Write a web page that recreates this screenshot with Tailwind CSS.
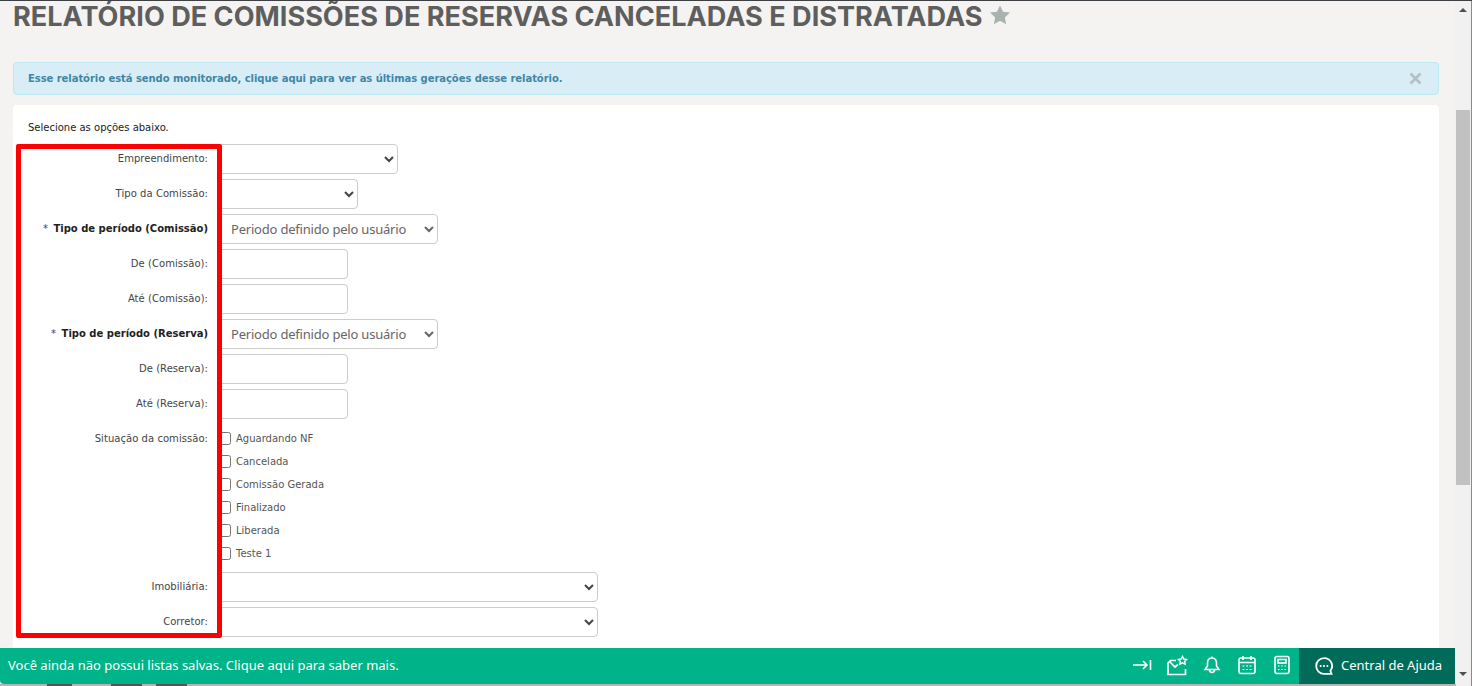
<!DOCTYPE html>
<html lang="pt-BR">
<head>
  <meta charset="UTF-8">
  <title>Relatório de comissões</title>
  <script src="https://cdn.jsdelivr.net/npm/@tailwindcss/browser@4"></script>
</head>
<body class="bg-[#f4f3f2]">
  <div class="relative w-[1472px] h-[686px] overflow-hidden flex border-t border-[#3c4043] font-['DejaVu_Sans',sans-serif] text-[10px]">

    <!-- Page content -->
    <main class="w-[1455px] shrink-0 px-[13px] pr-[16px]">
      <div class="h-[61px] flex items-start">
        <h1 class="font-['Inter',sans-serif] font-bold text-[27.1px] leading-[32px] text-[#5e5e5e] whitespace-nowrap">RELATÓRIO DE COMISSÕES DE RESERVAS CANCELADAS E DISTRATADAS</h1>
        <svg class="mt-[3px] ml-[6px] w-[22px] h-[22px] text-[#a9b2af]" viewBox="0 0 24 24" fill="currentColor"><path d="M12 1.500l3.300 6.900 7.500 1-5.500 5.200 1.400 7.500L12 18.400l-6.700 3.700 1.400-7.500L1.200 9.400l7.500-1z"/></svg>
      </div>

      <div class="h-[33px] flex items-center justify-between rounded border border-[#bce8f1] bg-[#d9edf7] pl-[14px] pr-[16px] font-bold text-[#3f86a8]">
        <span class="tracking-[-0.055px]">Esse relatório está sendo monitorado, clique aqui para ver as últimas gerações desse relatório.</span>
        <svg class="w-[13px] h-[13px] text-[#b4bfc4]" viewBox="0 0 13 13" fill="none" stroke="currentColor" stroke-width="2.500"><path d="M1.500 1.500l10 10M11.500 1.500l-10 10"/></svg>
      </div>

      <section class="mt-[10px] rounded-t bg-white pl-[15px] pt-[17px] h-[600px] text-[#444]">
        <p class="h-[22px] leading-[12px] text-[#222]">Selecione as opções abaixo.</p>

        <div class="grid grid-cols-[180px_1fr] gap-x-[10px] gap-y-[5px] items-center">
          <label class="text-right pb-[2px] tracking-[0.03px]">Empreendimento:</label>
          <select class="w-[180px] h-[30px] rounded border border-[#ccc] bg-white"></select>

          <label class="text-right pb-[2px] tracking-[0.05px]">Tipo da Comissão:</label>
          <select class="w-[140px] h-[30px] rounded border border-[#ccc] bg-white"></select>

          <label class="text-right pb-[2px] font-bold text-[#222]"><span class="mr-[2px] text-[#3a3a8c] font-normal">*</span> Tipo de período (Comissão)</label>
          <select class="w-[220px] h-[30px] rounded border border-[#ccc] bg-white pl-[8px] font-['Noto_Sans',sans-serif] text-[13px] tracking-[-0.2px] text-[#666]"><option>Periodo definido pelo usuário</option></select>

          <label class="text-right pb-[2px] tracking-[0.05px]">De (Comissão):</label>
          <input class="w-[130px] h-[30px] rounded border border-[#ccc] bg-white">

          <label class="text-right pb-[2px] tracking-[0.05px]">Até (Comissão):</label>
          <input class="w-[130px] h-[30px] rounded border border-[#ccc] bg-white">

          <label class="text-right pb-[2px] font-bold text-[#222]"><span class="mr-[2px] text-[#3a3a8c] font-normal">*</span> Tipo de período (Reserva)</label>
          <select class="w-[220px] h-[30px] rounded border border-[#ccc] bg-white pl-[8px] font-['Noto_Sans',sans-serif] text-[13px] tracking-[-0.2px] text-[#666]"><option>Periodo definido pelo usuário</option></select>

          <label class="text-right pb-[2px] tracking-[0.05px]">De (Reserva):</label>
          <input class="w-[130px] h-[30px] rounded border border-[#ccc] bg-white">

          <label class="text-right pb-[2px] tracking-[0.05px]">Até (Reserva):</label>
          <input class="w-[130px] h-[30px] rounded border border-[#ccc] bg-white">

          <label class="self-start mt-[7px] text-right tracking-[0.05px]">Situação da comissão:</label>
          <div class="flex flex-col pt-[3px] pb-[2px] text-[#555]">
            <label class="h-[23px] flex items-center gap-[5px]"><input type="checkbox" class="w-[13px] h-[13px]">Aguardando NF</label>
            <label class="h-[23px] flex items-center gap-[5px]"><input type="checkbox" class="w-[13px] h-[13px]">Cancelada</label>
            <label class="h-[23px] flex items-center gap-[5px]"><input type="checkbox" class="w-[13px] h-[13px]">Comissão Gerada</label>
            <label class="h-[23px] flex items-center gap-[5px]"><input type="checkbox" class="w-[13px] h-[13px]">Finalizado</label>
            <label class="h-[23px] flex items-center gap-[5px]"><input type="checkbox" class="w-[13px] h-[13px]">Liberada</label>
            <label class="h-[23px] flex items-center gap-[5px]"><input type="checkbox" class="w-[13px] h-[13px]">Teste 1</label>
          </div>

          <label class="text-right pb-[2px] tracking-[0.05px]">Imobiliária:</label>
          <select class="w-[380px] h-[30px] rounded border border-[#ccc] bg-white"></select>

          <label class="text-right pb-[2px] tracking-[0.05px]">Corretor:</label>
          <select class="w-[380px] h-[30px] rounded border border-[#ccc] bg-white"></select>
        </div>
      </section>
    </main>

    <!-- Scrollbar -->
    <aside class="w-[17px] shrink-0 bg-[#f1f1f1] border-r border-[#8a8a8a] flex flex-col items-center">
      <div class="mt-[7px] w-0 h-0 border-x-[4px] border-x-transparent border-b-[4px] border-b-[#505050]"></div>
      <div class="mt-[98px] w-[14px] h-[375px] bg-[#c1c1c1]"></div>
      <div class="mt-[187px] w-0 h-0 border-x-[4px] border-x-transparent border-t-[4px] border-t-[#505050]"></div>
    </aside>

    <!-- Highlight drawn over the labels -->
    <div class="absolute left-[16px] top-[143px] w-[206px] h-[494px] rounded-[2px] border-[5px] border-[#ff0000]"></div>

    <!-- Fixed footer bar -->
    <div class="absolute left-0 top-[647px] w-[1455px] h-[36px] rounded-bl flex items-center bg-[#00b388] text-white font-['Noto_Sans',sans-serif] text-[13px]">
      <span class="ml-[8px] flex-1">Você ainda não possui listas salvas. Clique aqui para saber mais.</span>
      <div class="flex">
        <span class="w-[35px] flex justify-center"><svg class="w-[20px] h-[20px]" viewBox="0 0 20 20" fill="none" stroke="white" stroke-width="1.600"><path d="M1 10h14M11 6l4 4-4 4M18.500 5v10"/></svg></span>
        <span class="w-[35px] flex justify-center"><svg class="w-[22px] h-[22px]" viewBox="0 0 22 22" fill="none" stroke="white" stroke-width="1.700"><path d="M10 5.500H4.500L2 8v11.500h17.500V14M3 6l6 6 3-2.500"/><path d="M16.500 1.500l1.400 2.600 2.600.4-1.900 2 .5 2.700-2.600-1.300-2.600 1.300.5-2.700-1.900-2 2.600-.4z" stroke-width="1.500"/></svg></span>
        <span class="w-[35px] flex justify-center"><svg class="w-[20px] h-[20px]" viewBox="0 0 20 20" fill="none" stroke="white" stroke-width="1.600"><path d="M10 1.500v1.500M10 3c-3 0-4.500 2.300-4.500 5v3L3 14.500h14L14.500 11V8c0-2.700-1.500-5-4.500-5zM7.500 14.500c0 2 1 3 2.500 3s2.500-1 2.500-3"/></svg></span>
        <span class="w-[35px] flex justify-center"><svg class="w-[20px] h-[20px]" viewBox="0 0 20 20" fill="none" stroke="white" stroke-width="1.600"><rect x="2" y="3" width="16" height="15.500" rx="2"/><path d="M2 7.500h16M6 1v4M14 1v4"/><path d="M5.500 11h2M9 11h2M12.500 11h2M5.500 14.500h2M9 14.500h2M12.500 14.500h2" stroke-width="1.200"/></svg></span>
        <span class="w-[35px] flex justify-center"><svg class="w-[20px] h-[20px]" viewBox="0 0 20 20" fill="none" stroke="white" stroke-width="1.600"><rect x="3" y="1.500" width="14" height="17" rx="2"/><rect x="6" y="4.500" width="8" height="3.500"/><path d="M6 11h1.500M9.200 11h1.500M12.500 11h1.500M6 14.500h1.500M9.200 14.500h1.500M12.500 14.500h1.500" stroke-width="1.200"/></svg></span>
      </div>
      <div class="w-[156px] h-full flex items-center bg-[#016b5a]">
        <svg class="ml-[16px] w-[18px] h-[18px]" viewBox="0 0 18 18" fill="none" stroke="white" stroke-width="1.800"><path d="M9 1.200a7.800 7.800 0 1 0 0 15.600h7.500l-1.100-3A7.800 7.800 0 0 0 9 1.200z"/><path d="M4.800 9h1.600M8.200 9h1.600M11.600 9h1.600" stroke-width="2"/></svg>
        <span class="ml-[8px] whitespace-nowrap">Central de Ajuda</span>
      </div>
    </div>

    <!-- Strip below the window -->
    <div class="absolute left-0 top-[683px] w-[1456px] h-[2px] bg-[#b5b5b5] flex">
      <span class="ml-[47px] w-[25px] bg-[#555]"></span>
      <span class="ml-[39px] w-[31px] bg-[#555]"></span>
      <span class="ml-[14px] w-[31px] bg-[#555]"></span>
    </div>
  </div>
</body>
</html>
